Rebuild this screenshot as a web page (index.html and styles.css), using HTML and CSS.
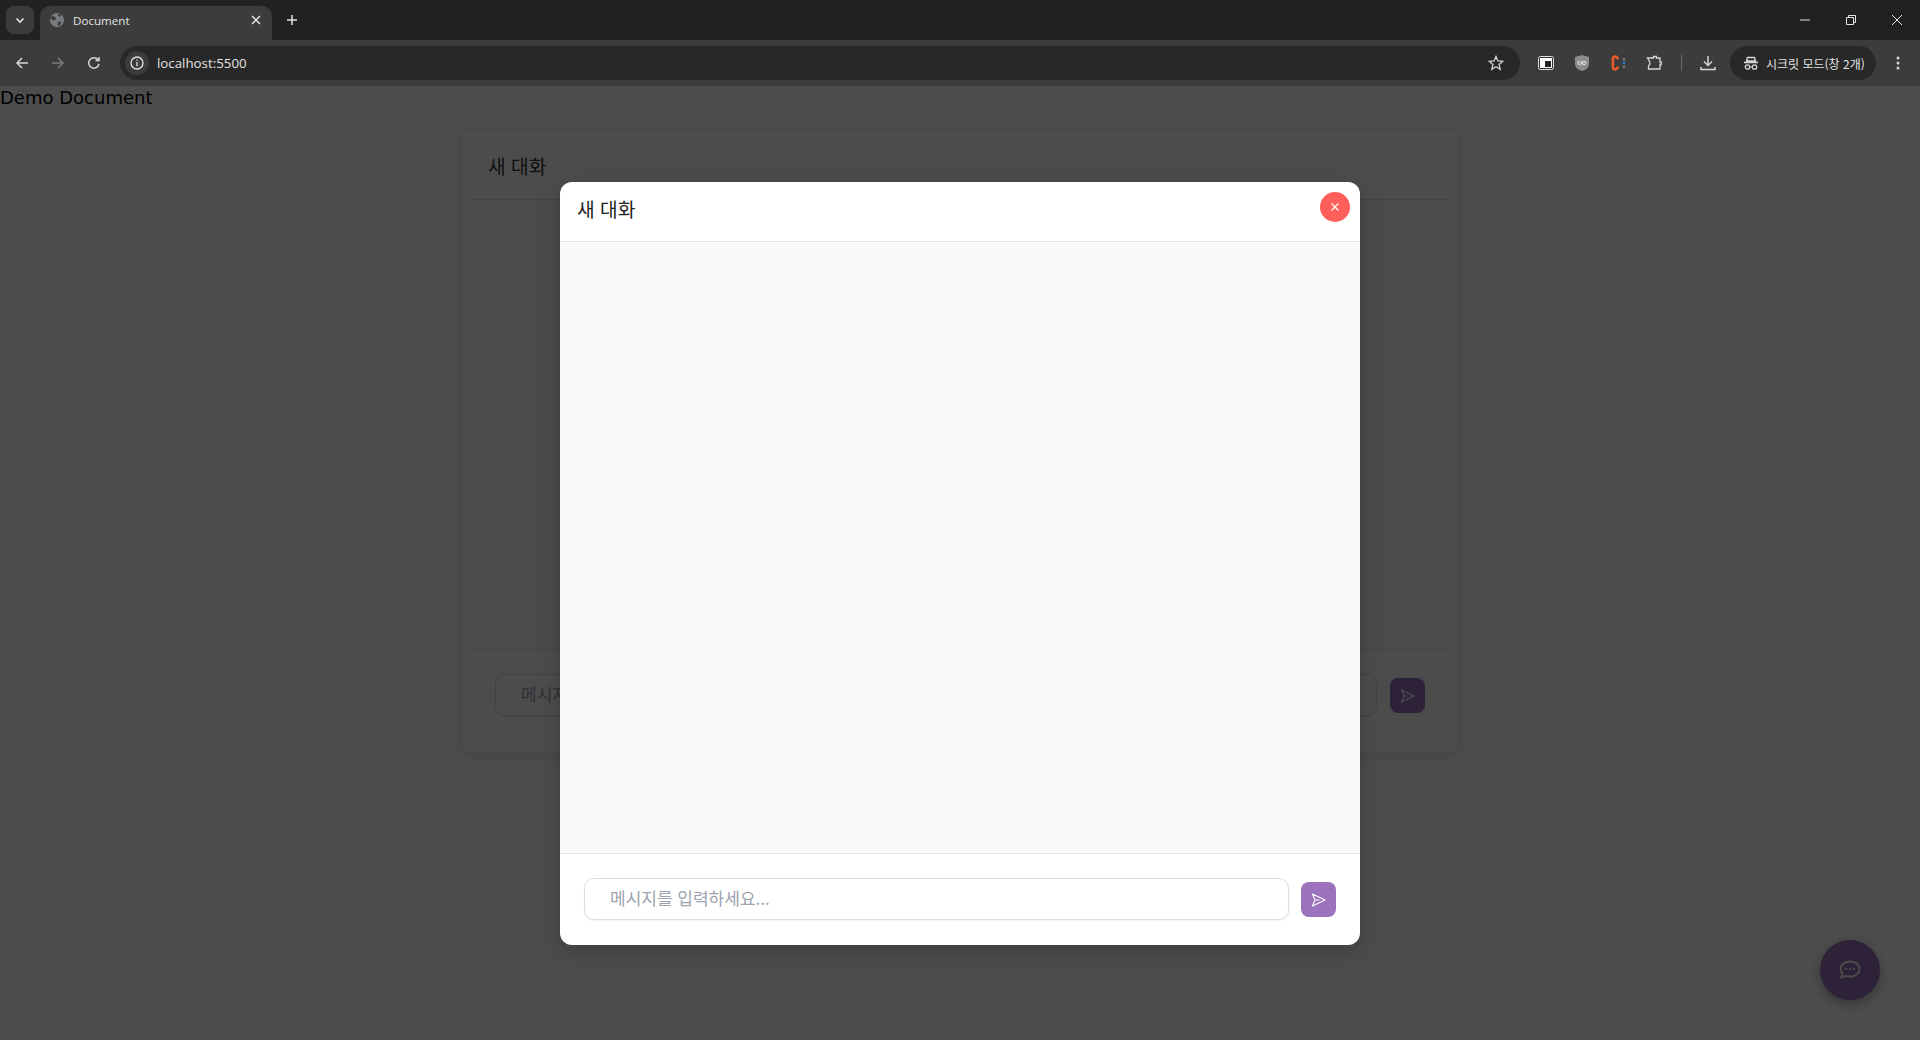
FILE: index.html
```html
<!DOCTYPE html>
<html lang="ko">
<head>
    <meta charset="UTF-8">
    <title>Document</title>
    <link rel="stylesheet" href="styles.css">
</head>
<body>
    <div class="tabstrip">
        <button class="tab-search">
            <svg width="12" height="12" viewBox="0 0 12 12"><path d="M2.5 4.5 6 8l3.5-3.5" fill="none" stroke="#e3e3e3" stroke-width="1.6"/></svg>
        </button>
        <div class="tab">
            <svg class="favicon" width="16" height="16" viewBox="0 0 16 16"><circle cx="8" cy="8" r="7" fill="#7b7e81"/><path d="M3 3.5 7 5.5 6.5 8 4 8.5 1.5 6.5ZM9 9.5l3.5.5-2 4-2-1ZM9.5 1.5l3 1.5L11 5 9 3.500Z" fill="#3c3c3c"/></svg>
            <span class="tab-title">Document</span>
            <svg class="tab-close" width="10" height="10" viewBox="0 0 10 10"><path d="M1 1l8 8M9 1 1 9" stroke="#e3e3e3" stroke-width="1.5"/></svg>
        </div>
        <svg class="new-tab" width="12" height="12" viewBox="0 0 12 12"><path d="M6 1v10M1 6h10" stroke="#e3e3e3" stroke-width="1.5"/></svg>
        <div class="window-btns">
            <svg width="10" height="10" viewBox="0 0 10 10"><path d="M0 5h10" stroke="#e3e3e3"/></svg>
            <svg width="10" height="10" viewBox="0 0 10 10"><path d="M.5 2.500h7v7h-7zM2.500 2.500v-2h7v7h-2" fill="none" stroke="#e3e3e3"/></svg>
            <svg width="10" height="10" viewBox="0 0 10 10"><path d="M0 0l10 10M10 0 0 10" stroke="#e3e3e3"/></svg>
        </div>
    </div>
    <div class="toolbar">
        <svg class="nav-icon" width="16" height="16" viewBox="0 0 16 16"><path d="M14 8H3M8 3 3 8l5 5" fill="none" stroke="#d5d5d5" stroke-width="1.5"/></svg>
        <svg class="nav-icon" width="16" height="16" viewBox="0 0 16 16"><path d="M2 8h11M8 3l5 5-5 5" fill="none" stroke="#7b7b7b" stroke-width="1.5"/></svg>
        <svg class="nav-icon" width="16" height="16" viewBox="0 0 16 16"><path d="M13 9a5.200 5.200 0 1 1-1-4.300M13 2v3.500H9.500" fill="none" stroke="#d5d5d5" stroke-width="1.5"/></svg>
        <div class="omnibox">
            <span class="site-info">
                <svg width="14" height="14" viewBox="0 0 14 14"><circle cx="7" cy="7" r="6" fill="none" stroke="#e3e3e3" stroke-width="1.300"/><path d="M7 6v4.200M7 3.500v1.300" stroke="#e3e3e3" stroke-width="1.300"/></svg>
            </span>
            <span class="url">localhost:5500</span>
            <svg class="star" width="16" height="16" viewBox="0 0 16 16"><path d="M8 1.500 9.900 6l4.800.4-3.600 3.200 1.100 4.700L8 11.800l-4.200 2.500 1.100-4.700L1.300 6.400 6.100 6Z" fill="none" stroke="#d5d5d5" stroke-width="1.300"/></svg>
        </div>
        <div class="ext-icons">
            <svg width="16" height="14" viewBox="0 0 16 14"><rect x=".5" y=".5" width="15" height="13" rx="2" fill="#333" stroke="#ddd"/><rect x="2" y="2" width="12" height="10" fill="#fff"/><rect x="7" y="5" width="6" height="6" fill="#222"/></svg>
            <svg width="16" height="18" viewBox="0 0 16 18"><path d="M8 1 15 3v7c0 4-4 6-7 7-3-1-7-3-7-7V3Z" fill="#8c8c8c"/><text class="ublock-mark" x="8" y="10.500" text-anchor="middle">UO</text></svg>
            <svg width="16" height="18" viewBox="0 0 16 18"><path d="M7.700 5.500V5a2.400 2.400 0 0 0-4.800 0v8a2.400 2.400 0 0 0 4.800 0v-.5" fill="none" stroke="#e85a2a" stroke-width="2.600"/><rect x="12.700" y="4" width="2.500" height="2.500" fill="#777"/><rect x="12.700" y="7.700" width="2.500" height="2.500" fill="#2f7fd8"/><rect x="12.700" y="11.500" width="2.500" height="2.500" fill="#777"/></svg>
            <svg width="16" height="16" viewBox="0 0 16 16"><path d="M5.500 3h2V1.500h3V3h3.500v4h1.200v2.500H14V14H2.500v-3.500l1.300-1V7L1.500 3Z" fill="none" stroke="#d5d5d5" stroke-width="1.300"/></svg>
        </div>
        <div class="separator"></div>
        <svg class="download" width="16" height="16" viewBox="0 0 16 16"><path d="M8 1v9M4 6.500 8 10.500l4-4M1 12v2.500h14V12" fill="none" stroke="#d5d5d5" stroke-width="1.500"/></svg>
        <div class="incognito">
            <svg width="16" height="16" viewBox="0 0 16 16"><path d="M4.500 2.500h7l1 3.500h-9ZM1 7.500h14" fill="none" stroke="#d5d5d5" stroke-width="1.400"/><circle cx="4.500" cy="12" r="2.200" fill="none" stroke="#d5d5d5" stroke-width="1.300"/><circle cx="11.500" cy="12" r="2.200" fill="none" stroke="#d5d5d5" stroke-width="1.300"/><path d="M6.800 12h2.400" stroke="#d5d5d5"/></svg>
            <span>시크릿 모드(창 2개)</span>
        </div>
        <svg class="menu" width="4" height="14" viewBox="0 0 4 14"><circle cx="2" cy="2" r="1.500" fill="#d5d5d5"/><circle cx="2" cy="7" r="1.500" fill="#d5d5d5"/><circle cx="2" cy="12" r="1.500" fill="#d5d5d5"/></svg>
    </div>

    <main class="page">
        <div class="demo-text">Demo Document</div>

        <section class="chat-card">
            <header class="chat-head">새 대화</header>
            <div class="chat-body"></div>
            <footer class="chat-foot">
                <input class="chat-input" type="text" placeholder="메시지를 입력하세요...">
                <button class="send-btn">
                    <svg width="16" height="16" viewBox="0 0 16 16"><path d="M1.500 2 14 8 1.500 14 4 8Zm2.500 6h4.500" fill="none" stroke="#fff" stroke-width="1.100" stroke-linejoin="round"/></svg>
                </button>
            </footer>
        </section>

        <button class="fab">
            <svg width="24" height="24" viewBox="0 0 24 24"><path d="M12 3.500c5 0 9.500 3 9.500 7.500s-4.500 7.500-9.500 7.500c-1.500 0-3-.3-4-.7-1.500 1-3 1.700-5 1.700 1-1.200 1.500-2.300 1.500-3.700C3 14.500 2.500 12.800 2.500 11c0-4.500 4.500-7.500 9.500-7.500Z" fill="none" stroke="#fff" stroke-width="1.800"/><circle cx="8" cy="11" r="1.100" fill="#fff"/><circle cx="12" cy="11" r="1.100" fill="#fff"/><circle cx="16" cy="11" r="1.100" fill="#fff"/></svg>
        </button>

        <div class="overlay">
            <section class="modal">
                <header class="modal-head">
                    <span class="modal-title">새 대화</span>
                    <button class="close-btn">
                        <svg width="10" height="10" viewBox="0 0 10 10"><path d="M1.500 1.500l7 7M8.500 1.500l-7 7" stroke="#fff" stroke-width="1.200"/></svg>
                    </button>
                </header>
                <div class="modal-body"></div>
                <footer class="modal-foot">
                    <input class="chat-input" type="text" placeholder="메시지를 입력하세요...">
                    <button class="send-btn">
                        <svg width="16" height="16" viewBox="0 0 16 16"><path d="M1.500 2 14 8 1.500 14 4 8Zm2.500 6h4.500" fill="none" stroke="#fff" stroke-width="1.100" stroke-linejoin="round"/></svg>
                    </button>
                </footer>
            </section>
        </div>
    </main>
</body>
</html>
```

FILE: styles.css
```css
* { box-sizing: border-box; }
html, body { height: 100%; }
body { margin: 0; background: #fff; display: flex; flex-direction: column; overflow: hidden; font-family: "Noto Sans CJK KR", sans-serif; }
button { border: none; padding: 0; cursor: pointer; }

/* browser frame */
.tabstrip { height: 40px; background: #202221; display: flex; align-items: center; flex-shrink: 0; }
.tab-search { width: 28px; height: 28px; margin-left: 6px; background: #3c3c3c; border-radius: 8px; display: flex; align-items: center; justify-content: center; }
.tab { width: 232px; height: 34px; margin: 6px 0 0 6px; padding: 0 10px 6px 9px; background: #3c3c3c; border-radius: 10px 10px 0 0; display: flex; align-items: center; align-self: flex-start; }
.tab-title { flex: 1; margin-left: 8px; font: 11.6px "Open Sans", sans-serif; color: #e3e3e3; }
.tab-close { margin-right: 1px; }
.new-tab { margin-left: 14px; }
.window-btns { margin-left: auto; display: flex; gap: 36px; padding-right: 18px; align-items: center; }
.toolbar { height: 46px; background: #3c3c3c; display: flex; align-items: center; padding-left: 14px; flex-shrink: 0; }
.nav-icon { margin-right: 20px; flex-shrink: 0; }
.nav-icon + .omnibox { margin-left: -2px; }
.omnibox { flex: 1; height: 34px; background: #282828; border-radius: 17px; display: flex; align-items: center; padding: 0 16px 0 5px; }
.site-info { width: 24px; height: 24px; border-radius: 50%; background: #3c3c3c; display: flex; align-items: center; justify-content: center; }
.url { flex: 1; margin-left: 8px; font: 13.3px "Open Sans", sans-serif; color: #e3e3e3; }
.ext-icons { display: flex; align-items: center; gap: 20px; margin-left: 18px; }
.ublock-mark { font: bold 6px "Liberation Sans", sans-serif; fill: #eee; }
.separator { width: 1px; height: 16px; background: #6a6a6a; margin: 0 18px 0 19px; }
.download { flex-shrink: 0; }
.incognito { width: 146px; height: 34px; margin-left: 14px; background: #282828; border-radius: 17px; display: flex; align-items: center; padding-left: 13px; gap: 7px; font-size: 12px; color: #e3e3e3; white-space: nowrap; }
.menu { margin: 0 20px; flex-shrink: 0; }

/* page */
.page { flex: 1; position: relative; background: #fff; }
.demo-text { font: 18px/24px "DejaVu Sans", sans-serif; color: #000; }
.chat-card { width: 1000px; height: 625px; margin: 19px auto 0; background: #fff; border-radius: 12px; box-shadow: 0 4px 12px rgba(0,0,0,.1); border: 1px solid #e4e4e4; display: flex; flex-direction: column; padding: 0 10px; }
.chat-head { height: 70px; padding: 2px 17px 0; display: flex; align-items: center; font-size: 19.2px; color: #333; border-bottom: 1px solid #e0e0e0; flex-shrink: 0; }
.chat-body { flex: 1; background: #f9fafb; }
.chat-foot { height: 104px; border-top: 1px solid #e0e0e0; display: flex; gap: 13px; padding: 24px 24px 0; align-items: flex-start; flex-shrink: 0; }
.chat-foot .send-btn { margin-top: 4px; }
.chat-input { flex: 1; height: 42px; border: 1px solid #ddd; border-radius: 10px; padding: 0 25px 3px; font: 17px "Noto Sans CJK KR", sans-serif; color: #333; background: #fff; outline: none; box-shadow: 0 1px 2px rgba(0,0,0,.05); }
.chat-input::placeholder { color: #9ca3af; }
.send-btn { width: 35px; height: 35px; border-radius: 8px; background: #9b72bb; display: flex; align-items: center; justify-content: center; flex-shrink: 0; }
.fab { position: absolute; right: 40px; bottom: 40px; width: 60px; height: 60px; border-radius: 50%; background: #9b72bb; display: flex; align-items: center; justify-content: center; box-shadow: 0 4px 12px rgba(0,0,0,.3); }

/* modal */
.overlay { position: absolute; inset: 0; background: rgba(0,0,0,.7); display: flex; align-items: center; justify-content: center; }
.modal { width: 800px; height: 763px; margin-top: 1px; background: #fff; border-radius: 12px; display: flex; flex-direction: column; overflow: hidden; box-shadow: 0 5px 20px rgba(0,0,0,.2); }
.modal-head { height: 60px; padding: 0 10px 10px 17px; display: flex; align-items: center; justify-content: space-between; border-bottom: 1px solid #e5e5e5; flex-shrink: 0; }
.modal-title { font-size: 19.2px; color: #222; margin-top: 4px; }
.close-btn { width: 30px; height: 30px; border-radius: 50%; background: #ff5f5b; display: flex; align-items: center; justify-content: center; }
.modal-body { flex: 1; background: #f9fafb; }
.modal-foot { height: 92px; border-top: 1px solid #e5e5e5; display: flex; gap: 12px; padding: 24px 24px 0; align-items: flex-start; flex-shrink: 0; }
.modal-foot .send-btn { margin-top: 4px; }
```
